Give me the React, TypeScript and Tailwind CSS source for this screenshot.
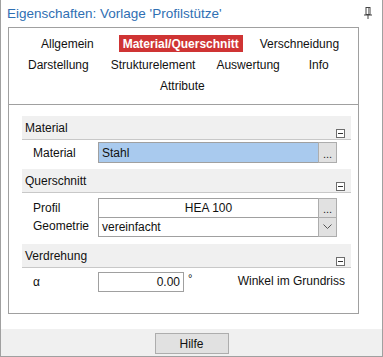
import React from "react";

const F = { fontFamily: '"Liberation Sans", Arial, sans-serif' };

function Collapse() {
  return (
    <div className="w-[9px] h-[9px] border border-[#6d6d6d] bg-white flex items-center justify-center">
      <div className="w-[5px] h-px bg-[#333]" />
    </div>
  );
}

function SectionHeader({ title }: { title: string }) {
  return (
    <div className="h-[24px] bg-[#f0f0f0] border-b border-[#c8c8c8] flex items-start justify-between pl-[3px] pr-[6px]">
      <span className="text-[12px] leading-[16px] mt-[4px] text-[#111]">{title}</span>
      <div className="mt-[13px]">
        <Collapse />
      </div>
    </div>
  );
}

function Dots() {
  return (
    <div className="w-[19px] bg-[#e1e1e1] border border-[#adadad] -ml-px flex items-end justify-center pb-[2px] text-[11px] leading-[11px] text-[#222]">
      ...
    </div>
  );
}

export default function App() {
  return (
    <div style={F} className="w-[383px] h-[357px] bg-white border-x border-b border-[#a0a0a0] flex flex-col text-[#111]">
      <div className="h-[27px] flex items-start justify-between pl-[6px] pr-[10px]">
        <span className="text-[13.5px] leading-[18px] mt-[5px] text-[#2f6fb3]">Eigenschaften: Vorlage 'Profilstütze'</span>
        <svg width="8" height="12" viewBox="0 0 8 12" className="mt-[7px]">
          <rect x="2" y="0.5" width="4" height="7" fill="none" stroke="#444" />
          <rect x="4" y="1" width="1" height="6" fill="#999" />
          <line x1="0" y1="8" x2="8" y2="8" stroke="#444" />
          <line x1="4" y1="8" x2="4" y2="12" stroke="#444" />
        </svg>
      </div>
      <div className="ml-[7px] w-[351px] h-[287px] border border-[#a0a0a0] flex flex-col">
        <div className="h-[77px] border-b border-[#a0a0a0] text-[12px] leading-[16px] flex flex-col">
          <div className="h-[17px] mt-[7px] flex items-center">
            <span className="ml-[32px]">Allgemein</span>
            <span className="ml-[25px] h-[17px] bg-[#cf3434] text-white font-bold px-[4px] flex items-center">Material/Querschnitt</span>
            <span className="ml-[17px]">Verschneidung</span>
          </div>
          <div className="h-[17px] mt-[4px] flex items-center">
            <span className="ml-[19px]">Darstellung</span>
            <span className="ml-[22px]">Strukturelement</span>
            <span className="ml-[21px]">Auswertung</span>
            <span className="ml-[29px]">Info</span>
          </div>
          <div className="h-[17px] mt-[4px] flex items-center">
            <span className="ml-[151px]">Attribute</span>
          </div>
        </div>
        <div className="pl-[13px] pr-[7px] pt-[11px] flex flex-col text-[12px] leading-[16px]">
          <SectionHeader title="Material" />
          <div className="h-[21px] mt-[2px] flex">
            <span className="w-[76px] pl-[11px] pt-[3px]">Material</span>
            <div className="w-[221px] bg-[#a9caee] border border-[#a0a0a0] pl-[3px] pt-[2px]">Stahl</div>
            <Dots />
          </div>
          <div className="mt-[6px]">
            <SectionHeader title="Querschnitt" />
          </div>
          <div className="h-[20px] mt-[5px] flex">
            <span className="w-[76px] pl-[11px] pt-[2px]">Profil</span>
            <div className="w-[221px] bg-white border border-[#a0a0a0] text-center pt-[1px]">HEA 100</div>
            <Dots />
          </div>
          <div className="h-[20px] -mt-px flex">
            <span className="w-[76px] pl-[11px] pt-[1px]">Geometrie</span>
            <div className="w-[221px] bg-white border border-[#a0a0a0] pl-[3px] pt-[1px]">vereinfacht</div>
            <div className="w-[19px] bg-[#e1e1e1] border border-[#adadad] -ml-px flex items-center justify-center">
              <svg width="9" height="6" viewBox="0 0 9 6">
                <polyline points="0.5,0.5 4.5,4.5 8.5,0.5" fill="none" stroke="#555" />
              </svg>
            </div>
          </div>
          <div className="mt-[7px]">
            <SectionHeader title="Verdrehung" />
          </div>
          <div className="h-[20px] mt-[4px] flex items-start">
            <span className="w-[76px] pl-[11px] pt-[2px]">α</span>
            <div className="w-[86px] h-[20px] bg-white border border-[#a0a0a0] text-right pr-[3px] pt-[1px]">0.00</div>
            <span className="ml-[4px] text-[11px] leading-[12px]">°</span>
            <span className="ml-auto mr-[6px] pt-[1px]">Winkel im Grundriss</span>
          </div>
        </div>
      </div>
      <div className="flex-1 mt-[15px] bg-[#f0f0f0] flex justify-center items-start pt-[4px]">
        <div className="w-[74px] h-[21px] bg-[#e1e1e1] border border-[#adadad] text-[12px] flex items-center justify-center">Hilfe</div>
      </div>
    </div>
  );
}
